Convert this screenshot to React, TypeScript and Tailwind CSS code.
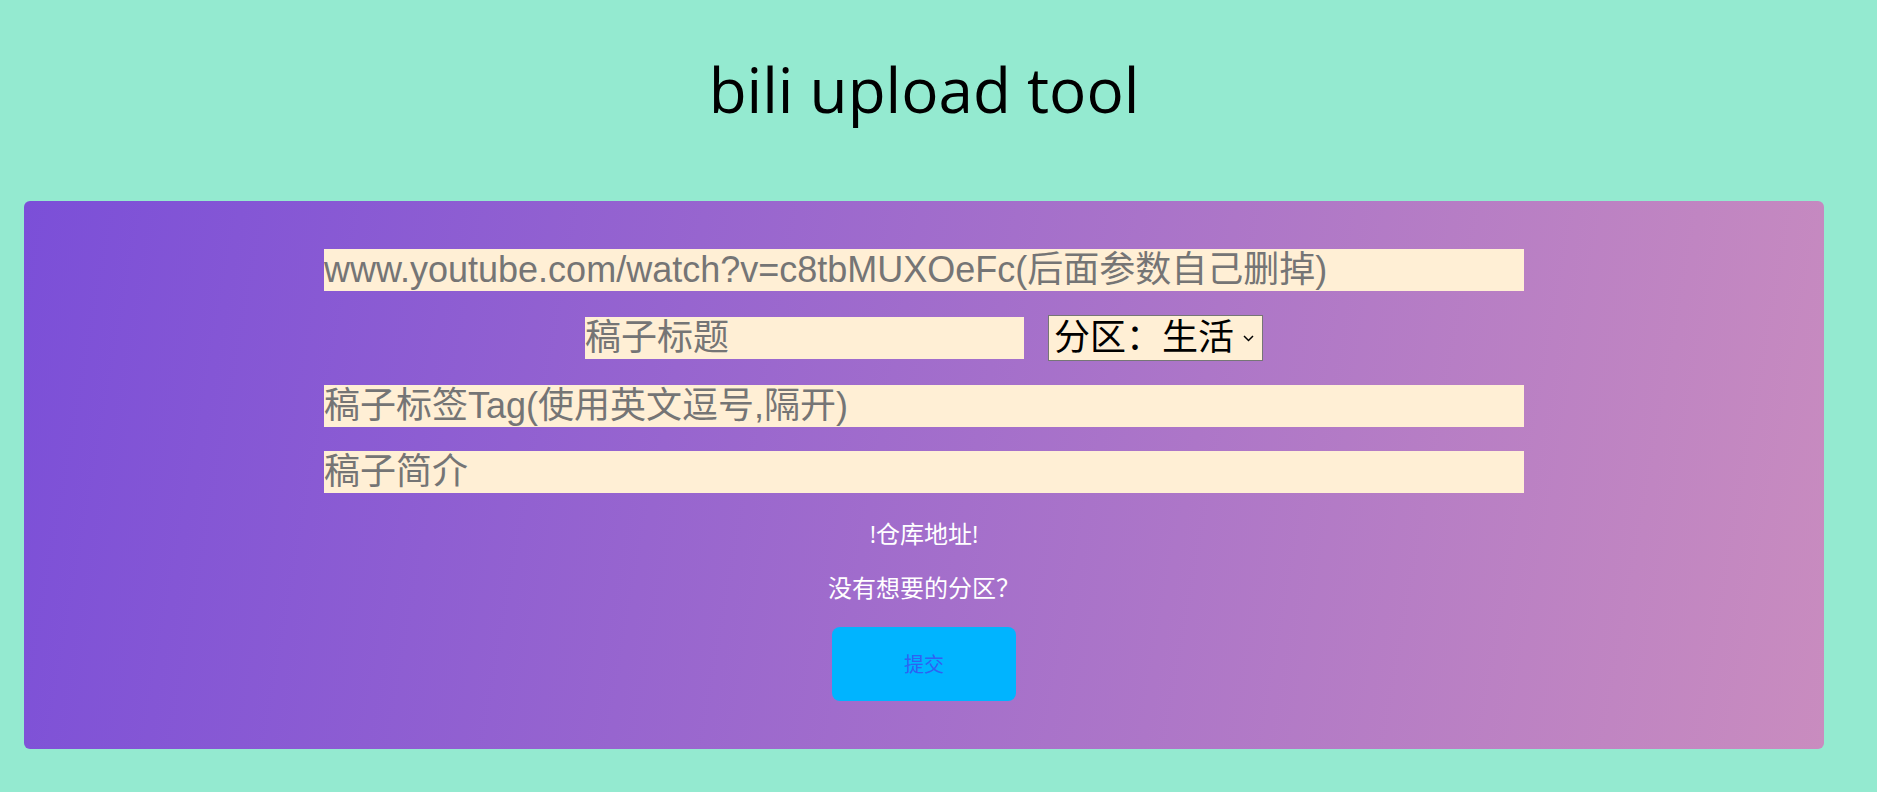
import { useState } from 'react';

const cjk = '"Liberation Sans", "Noto Sans CJK SC", sans-serif';

function Field({ placeholder, className = '' }: { placeholder: string; className?: string }) {
  return (
    <input
      type="text"
      placeholder={placeholder}
      className={`h-[42px] p-0 border-0 outline-none bg-[#ffefd5] text-[36px] leading-[42px] text-black placeholder:text-[#757575] font-['Liberation_Sans','Noto_Sans_CJK_SC',sans-serif] ${className}`}
    />
  );
}

export default function App() {
  const [zone, setZone] = useState('life');

  return (
    <div className="min-h-[792px] w-full bg-[#94ead0] font-['Open_Sans','Noto_Sans_CJK_SC',sans-serif]">
      <div className="w-[1848px]">
        <h1 className="pt-[58px] text-center text-[62px] leading-[62px] font-normal text-black">
          bili upload tool
        </h1>

        {/* main form card */}
        <div className="ml-[24px] mt-[81px] w-[1800px] rounded-md bg-[linear-gradient(100deg,#7b4fd8,#c98cbf)] pt-[48px] pb-[48px] flex flex-col items-center">
          <Field placeholder="www.youtube.com/watch?v=c8tbMUXOeFc(后面参数自己删掉)" className="w-[1200px]" />

          <div className="mt-[24px] flex items-center gap-[24px]">
            <Field placeholder="稿子标题" className="w-[439px]" />
            <div className="relative">
              <select
                value={zone}
                onChange={(e) => setZone(e.target.value)}
                style={{ fontFamily: cjk }}
                className="appearance-none h-[46px] w-[215px] border border-[#767676] bg-[#ffefd5] pl-[5px] text-[36px] leading-[44px] text-black outline-none"
              >
                <option value="life">分区：生活</option>
                <option value="game">分区：游戏</option>
                <option value="tech">分区：科技</option>
              </select>
              <svg
                className="pointer-events-none absolute right-[9px] top-[20px]"
                width="11"
                height="7"
                viewBox="0 0 11 7"
                fill="none"
              >
                <path d="M1 1l4.5 4.5L10 1" stroke="#000" strokeWidth="1.5" />
              </svg>
            </div>
          </div>

          <Field placeholder="稿子标签Tag(使用英文逗号,隔开)" className="mt-[24px] w-[1200px]" />
          <Field placeholder="稿子简介" className="mt-[24px] w-[1200px]" />

          <a className="mt-[29px] text-[24px] leading-[24px] text-white no-underline cursor-pointer">!仓库地址!</a>
          <a className="mt-[30px] text-[24px] leading-[24px] text-white no-underline cursor-pointer">没有想要的分区？</a>

          <button className="mt-[27px] h-[74px] w-[184px] rounded-lg bg-[#00b4ff] text-[20px] text-[#2f62f2] font-['Noto_Sans_CJK_SC',sans-serif]">
            提交
          </button>
        </div>
      </div>
    </div>
  );
}
